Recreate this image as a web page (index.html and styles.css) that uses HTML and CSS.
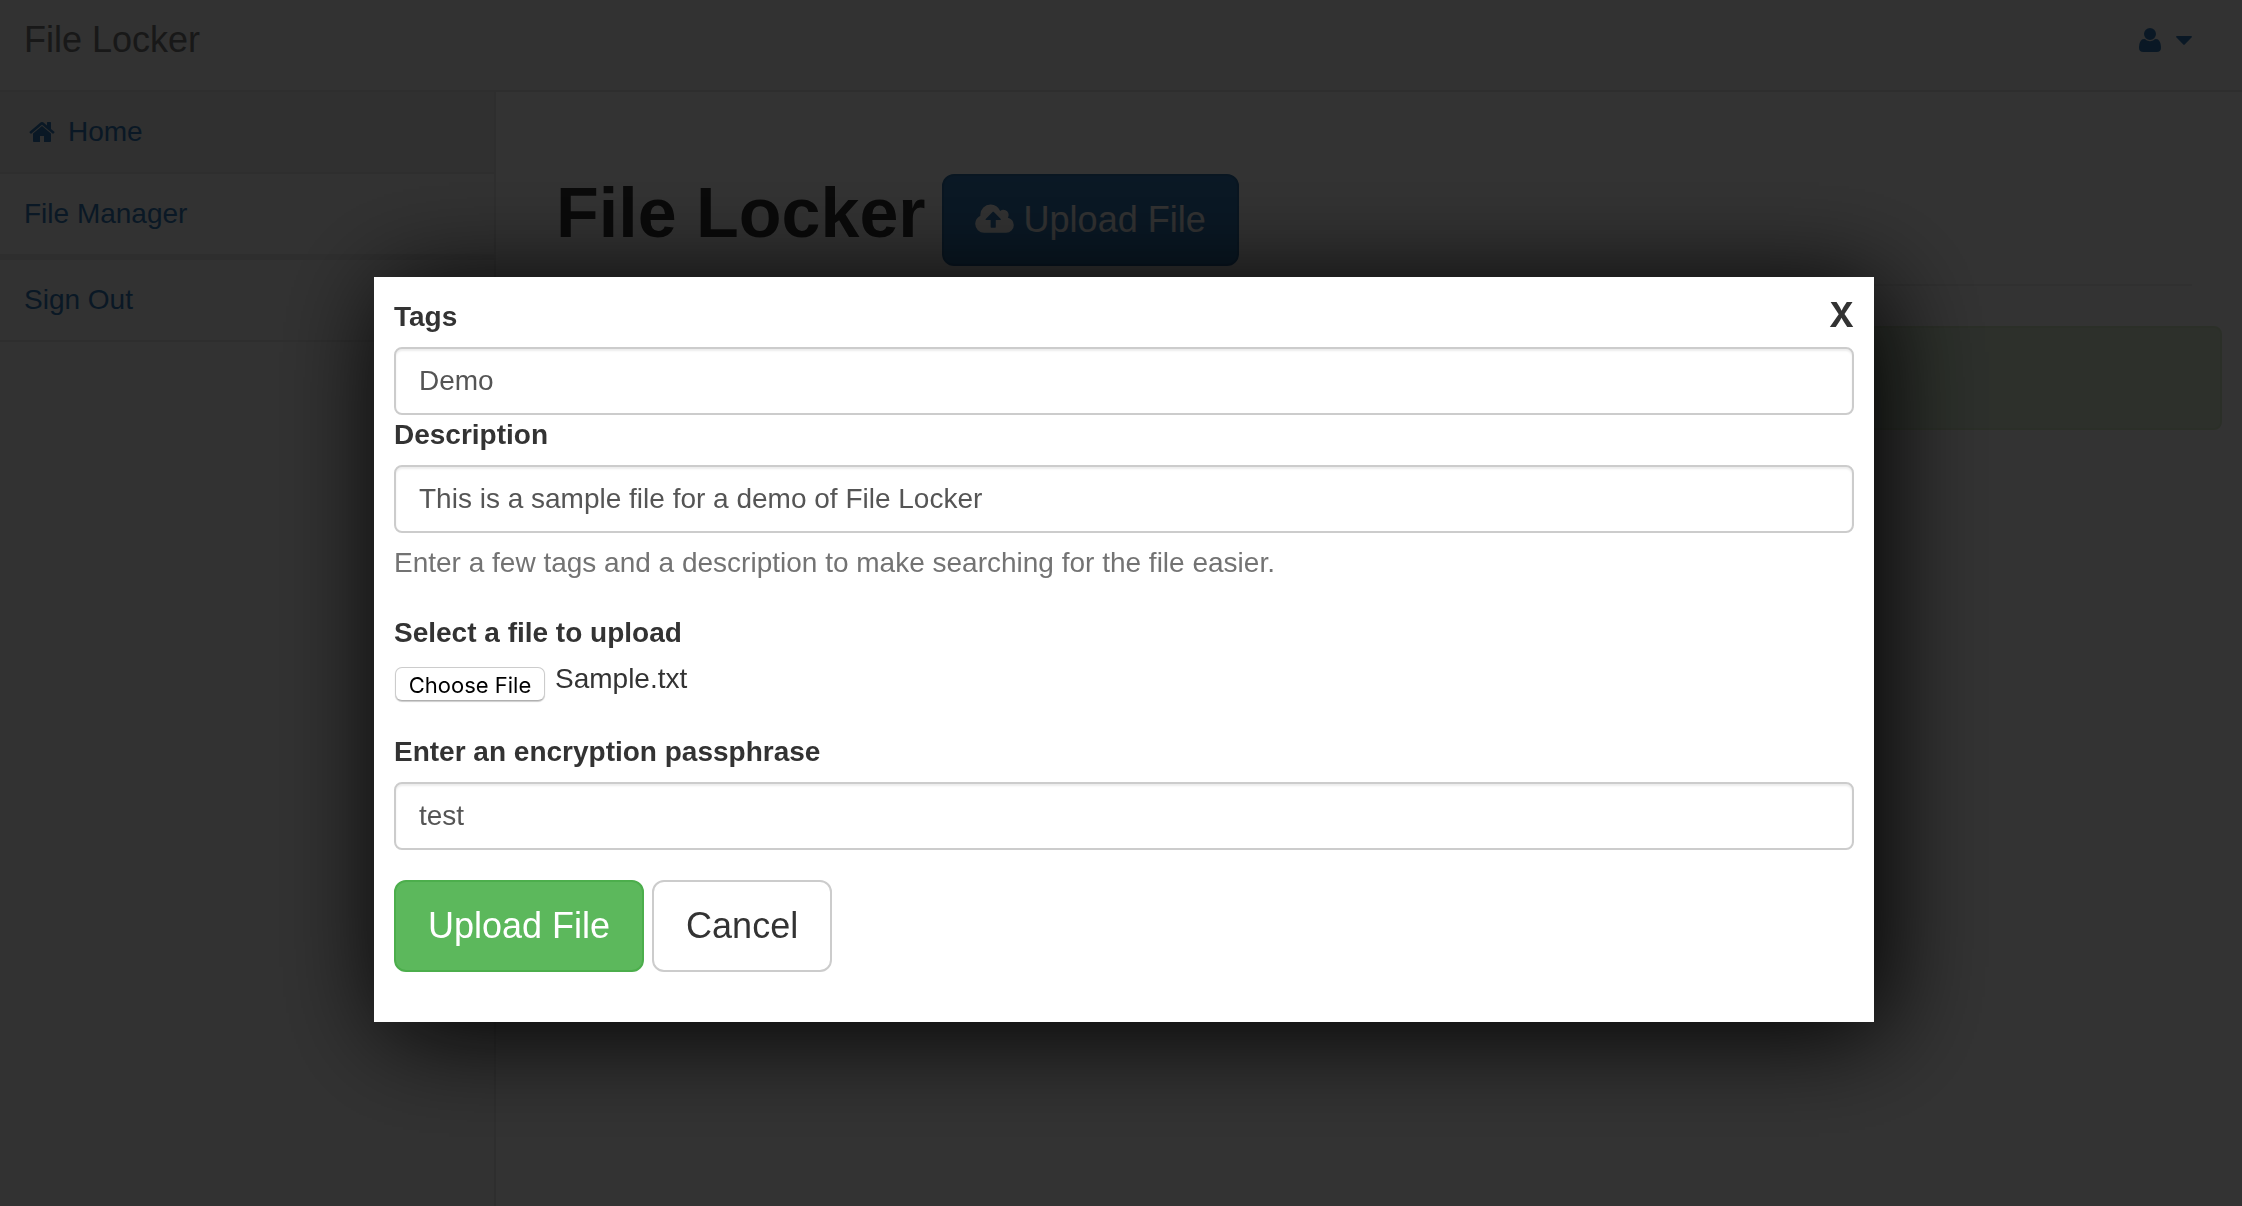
FILE: index.html
```html
<!DOCTYPE html>
<html lang="en">
<head>
<meta charset="utf-8">
<title>File Locker</title>
<link rel="stylesheet" href="styles.css">
</head>
<body>
<div class="page">
  <header class="topbar">
    <a class="brand" href="#">File Locker</a>
    <a class="account" href="#" aria-label="Account">
      <svg class="icon" viewBox="0 0 1792 1792" aria-hidden="true"><path d="M1600 1405q0 120-73 189.500t-194 69.500h-874q-121 0-194-69.500t-73-189.500q0-53 3.500-103.500t14-109 26.500-108.500 43-97.500 62-81 85.500-53.500 111.500-20q9 0 42 21.500t74.500 48 108 48 133.500 21.500 133.500-21.500 108-48 74.500-48 42-21.500q61 0 111.500 20t85.500 53.500 62 81 43 97.500 26.500 108.500 14 109 3.500 103.500zm-320-893q0 159-112.500 271.500t-271.500 112.500-271.500-112.500-112.500-271.500 112.500-271.500 271.500-112.500 271.500 112.500 112.500 271.500z"/></svg>
      <svg class="caret" viewBox="0 0 16 9" aria-hidden="true"><path d="M1 0h14q1 0 1 1L8.700 8.600q-.7.700-1.400 0L0 1q0-1 1-1z"/></svg>
    </a>
  </header>
  <div class="columns">
    <nav class="sidebar">
      <ul class="menu">
        <li class="menu-item"><a class="menu-link active" href="#"><svg class="icon" viewBox="0 0 1792 1792" aria-hidden="true"><path d="M1472 992v480q0 26-19 45t-45 19h-384v-384h-256v384h-384q-26 0-45-19t-19-45v-480q0-1 .5-3t.5-3l575-474 575 474q1 2 1 6zm223-69l-62 74q-8 9-21 11h-3q-13 0-21-7l-692-577-692 577q-12 8-24 7-13-2-21-11l-62-74q-8-10-7-23.500t11-21.500l719-599q32-26 76-26t76 26l244 204v-195q0-14 9-23t23-9h192q14 0 23 9t9 23v408l219 182q10 8 11 21.500t-7 23.500z"/></svg>Home</a></li>
        <li class="menu-item group-end"><a class="menu-link" href="#">File Manager</a></li>
        <li class="menu-item"><a class="menu-link" href="#">Sign Out</a></li>
      </ul>
    </nav>
    <main class="content">
      <div class="page-header">
        <h1 class="title">File Locker</h1>
        <button class="button primary" type="button"><svg class="cloud" viewBox="0 0 1920 1792" aria-hidden="true"><path d="M1280 864q0-14-9-23l-352-352q-9-9-23-9t-23 9l-351 351q-10 12-10 24 0 14 9 23t23 9h224v352q0 13 9.500 22.500t22.500 9.500h192q13 0 22.500-9.500t9.500-22.500v-352h224q13 0 22.500-9.500t9.500-22.500zm640 288q0 159-112.500 271.500t-271.500 112.500h-1088q-185 0-316.500-131.500t-131.500-316.500q0-130 70-240t188-165q-2-30-2-43 0-212 150-362t362-150q156 0 285.500 87t188.500 231q71-62 166-62 106 0 181 75t75 181q0 76-41 138 130 31 213.500 135.500t83.500 238.500z"/></svg>Upload File</button>
      </div>
      <div class="alert"></div>
    </main>
  </div>
</div>

<div class="overlay">
  <form class="modal" role="dialog" aria-label="Upload File">
    <div class="modal-top">
      <label class="label" for="tags">Tags</label>
      <button class="close" type="button">X</button>
    </div>
    <input class="field" id="tags" type="text" value="Demo">
    <label class="label" for="description">Description</label>
    <input class="field" id="description" type="text" value="This is a sample file for a demo of File Locker">
    <p class="help">Enter a few tags and a description to make searching for the file easier.</p>
    <label class="label" for="file">Select a file to upload</label>
    <div class="file-row">
      <input id="file" type="file" hidden>
      <button class="choose" type="button" onclick="document.getElementById('file').click()">Choose File</button>
      <span class="file-name">Sample.txt</span>
    </div>
    <label class="label" for="passphrase">Enter an encryption passphrase</label>
    <input class="field" id="passphrase" type="text" value="test">
    <div class="actions">
      <button class="button success" type="submit">Upload File</button>
      <button class="button plain" type="button">Cancel</button>
    </div>
  </form>
</div>
</body>
</html>
```
FILE: styles.css
```css
* {
  box-sizing: border-box;
}

body {
  margin: 0;
  background: #fff;
  color: #333;
  font: 28px/40px "Helvetica Neue", Helvetica, "Liberation Sans", Arial, sans-serif;
}

a {
  color: #337ab7;
  text-decoration: none;
}

button,
input {
  font: inherit;
}

svg {
  fill: currentColor;
  flex: none;
}

.page {
  display: flex;
  flex-direction: column;
  min-height: 100vh;
}

.topbar {
  display: flex;
  justify-content: space-between;
  align-items: flex-start;
  height: 92px;
  padding: 20px 50px 0 24px;
  border-bottom: 2px solid #e7e7e7;
  background: #f8f8f8;
}

.brand {
  color: #777;
  font-size: 36px;
}

.account {
  display: flex;
  align-items: center;
  gap: 12px;
  height: 40px;
}

.icon {
  width: 28px;
  height: 28px;
}

.caret {
  width: 16px;
  height: 9px;
}

.columns {
  display: flex;
  flex: 1;
}

.sidebar {
  flex: none;
  width: 496px;
  border-right: 2px solid #e7e7e7;
  background: #f8f8f8;
}

.menu {
  margin: 0;
  padding: 0;
  list-style: none;
}

.menu-item {
  border-bottom: 2px solid #e7e7e7;
}

.group-end {
  border-bottom-width: 6px;
}

.menu-link {
  display: flex;
  align-items: center;
  padding: 20px 24px;
}

.menu-link .icon {
  margin: 0 12px 0 4px;
}

.active {
  background: #eee;
}

.content {
  flex: 1;
  padding: 82px 20px 0 60px;
}

.page-header {
  display: flex;
  align-items: flex-start;
  gap: 16px;
  margin: 0 30px 40px 0;
  padding-bottom: 18px;
  border-bottom: 2px solid #eee;
}

.title {
  margin: 0;
  font-size: 70px;
  line-height: 78px;
}

.button {
  height: 92px;
  padding: 0 32px;
  border: 2px solid;
  border-radius: 12px;
  font-size: 36px;
}

.primary {
  display: flex;
  align-items: center;
  gap: 10px;
  padding: 0 31px;
  border-color: #2e6da4;
  background: #337ab7;
  color: #fff;
}

.cloud {
  width: 39px;
  height: 36px;
}

.success {
  border-color: #4cae4c;
  background: #5cb85c;
  color: #fff;
}

.plain {
  border-color: #ccc;
  background: #fff;
  color: #333;
}

.alert {
  height: 104px;
  border: 2px solid #d6e9c6;
  border-radius: 8px;
  background: #dff0d8;
}

.overlay {
  position: fixed;
  inset: 0;
  padding: 277px 368px 0 374px;
  overflow: auto;
  background: rgba(0, 0, 0, 0.8);
}

.modal {
  padding: 20px 20px 50px;
  background: #fff;
  box-shadow: 10px 10px 100px #000;
}

.modal-top {
  display: flex;
  justify-content: space-between;
}

.label {
  display: block;
  margin-bottom: 10px;
  font-weight: bold;
}

.close {
  height: 36px;
  padding: 0;
  border: 0;
  background: none;
  color: #333;
  font-family: Inter, sans-serif;
  font-size: 34px;
  font-weight: bold;
  line-height: 36px;
}

.field {
  display: block;
  width: 100%;
  height: 68px;
  padding: 12px 23px;
  border: 2px solid #ccc;
  border-radius: 8px;
  background: #fff;
  box-shadow: inset 0 2px 2px rgba(0, 0, 0, 0.075);
  color: #555;
}

.help {
  margin: 10px 0 30px;
  color: #737373;
}

.file-row {
  display: flex;
  align-items: flex-start;
  gap: 10px;
  margin: -4px 0 31px 1px;
}

.file-name {
  line-height: 40px;
}

.choose {
  width: 150px;
  height: 34px;
  margin-top: 8px;
  padding: 0;
  border: 1px solid #ccc;
  border-bottom-color: #b0b0b0;
  border-radius: 7px;
  background: #fff;
  box-shadow: 0 1px 1px rgba(0, 0, 0, 0.2);
  color: #000;
  font-family: Inter, sans-serif;
  font-size: 22px;
  line-height: 34px;
}

.actions {
  display: flex;
  gap: 8px;
  margin-top: 30px;
}
```
